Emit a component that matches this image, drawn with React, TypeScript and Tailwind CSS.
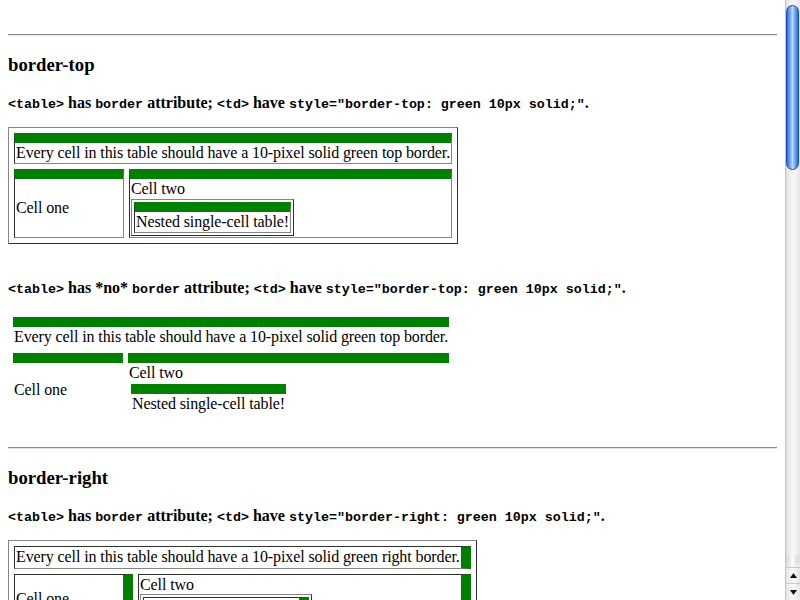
import type { ReactNode } from "react";

// Cell border variants, written out in full so Tailwind picks them up.
const CELL_TOP_BORDERED =
  "border-t-[10px] border-r border-b border-l border-t-[#008000] border-r-[#858585] border-b-[#858585] border-l-[#303030] p-px";
const CELL_TOP_PLAIN = "border-t-[10px] border-t-[#008000] p-px";
const CELL_RIGHT_BORDERED =
  "border-t border-r-[10px] border-b border-l border-t-[#303030] border-r-[#008000] border-b-[#858585] border-l-[#303030] p-px";

const TABLE_BORDERED =
  "border-separate border border-t-[#858585] border-l-[#858585] border-r-[#303030] border-b-[#303030]";

function Code({ children }: { children: ReactNode }) {
  return (
    <code className="font-['Liberation_Mono',monospace] text-[13.33px] font-bold leading-none">
      {children}
    </code>
  );
}

function Note({ noBorder, prop, className = "" }: { noBorder?: boolean; prop: string; className?: string }) {
  return (
    <p className={`text-[16px] font-bold leading-[18px] ${className}`}>
      <Code>&lt;table&gt;</Code> has {noBorder ? "*no* " : ""}
      <Code>border</Code> attribute; <Code>&lt;td&gt;</Code> have{" "}
      <Code>style="{prop}: green 10px solid;"</Code>.
    </p>
  );
}

function Heading({ children }: { children: ReactNode }) {
  return <h3 className="mt-[18px] text-[18.72px] font-bold leading-[22px]">{children}</h3>;
}

function Rule({ className = "" }: { className?: string }) {
  return <hr className={`h-0 border-t border-b border-t-[#8c8c8c] border-b-[#e4e4e4] ${className}`} />;
}

function BorderTopBordered() {
  return (
    <table className={`mt-[15px] border-spacing-[5px] tracking-[-0.1px] ${TABLE_BORDERED}`}>
      <tbody>
        <tr>
          <td colSpan={2} className={CELL_TOP_BORDERED}>
            Every cell in this table should have a 10-pixel solid green top border.
          </td>
        </tr>
        <tr>
          <td className={`w-[110px] ${CELL_TOP_BORDERED}`}>Cell one</td>
          <td className={CELL_TOP_BORDERED}>
            Cell two
            <table className={`border-spacing-[2px] ${TABLE_BORDERED}`}>
              <tbody>
                <tr>
                  <td className={CELL_TOP_BORDERED}>Nested single-cell table!</td>
                </tr>
              </tbody>
            </table>
          </td>
        </tr>
      </tbody>
    </table>
  );
}

function BorderTopPlain() {
  return (
    <table className="mt-[15px] border-separate border-spacing-[5px] tracking-[-0.1px]">
      <tbody>
        <tr>
          <td colSpan={2} className={CELL_TOP_PLAIN}>
            Every cell in this table should have a 10-pixel solid green top border.
          </td>
        </tr>
        <tr>
          <td className={`w-[110px] ${CELL_TOP_PLAIN}`}>Cell one</td>
          <td className={CELL_TOP_PLAIN}>
            Cell two
            <table className="border-separate border-spacing-[2px]">
              <tbody>
                <tr>
                  <td className={CELL_TOP_PLAIN}>Nested single-cell table!</td>
                </tr>
              </tbody>
            </table>
          </td>
        </tr>
      </tbody>
    </table>
  );
}

function BorderRightBordered() {
  return (
    <table className={`mt-[15px] border-spacing-[5px] tracking-[-0.1px] ${TABLE_BORDERED}`}>
      <tbody>
        <tr>
          <td colSpan={2} className={CELL_RIGHT_BORDERED}>
            Every cell in this table should have a 10-pixel solid green right border.
          </td>
        </tr>
        <tr>
          <td className={`w-[119px] ${CELL_RIGHT_BORDERED}`}>Cell one</td>
          <td className={CELL_RIGHT_BORDERED}>
            Cell two
            <table className={`border-spacing-[2px] ${TABLE_BORDERED}`}>
              <tbody>
                <tr>
                  <td className={CELL_RIGHT_BORDERED}>Nested single-cell table!</td>
                </tr>
              </tbody>
            </table>
          </td>
        </tr>
      </tbody>
    </table>
  );
}

function Scrollbar() {
  return (
    <div className="flex w-[15px] shrink-0 flex-col border-l border-l-[#c4c4c4] bg-[linear-gradient(to_right,#e2e2e2,#f6f6f6_45%,#f6f6f6_60%,#e6e6e6)]">
      <div className="flex flex-1 flex-col pt-[5px] pr-px">
        {/* thumb */}
        <div className="h-[165px] rounded-full border border-[#1c4bbd] bg-[linear-gradient(to_right,#2f68dc,#78aaf6_30%,#bcd9ff_50%,#78aaf6_70%,#2f68dc)]" />
        <div className="flex-1" />
        {/* track end cap */}
        <div className="h-[12px] rounded-b-full bg-[linear-gradient(to_right,#d6d6d6,#fbfbfb_50%,#d6d6d6)]" />
      </div>
      <div className="flex h-[16px] items-center justify-center border-t border-t-[#c8c8c8] bg-[linear-gradient(to_right,#e4e4e4,#fafafa_50%,#e4e4e4)]">
        <svg width="7" height="5" viewBox="0 0 7 5" aria-hidden="true">
          <path d="M3.5 0 L7 5 L0 5 Z" fill="#111" />
        </svg>
      </div>
      <div className="flex h-[17px] items-center justify-center border-t border-t-[#c8c8c8] bg-[linear-gradient(to_right,#e4e4e4,#fafafa_50%,#e4e4e4)]">
        <svg width="7" height="5" viewBox="0 0 7 5" aria-hidden="true">
          <path d="M0 0 L7 0 L3.5 5 Z" fill="#111" />
        </svg>
      </div>
    </div>
  );
}

export default function App() {
  return (
    <div className="flex h-[600px] w-[800px] overflow-hidden bg-white font-['Liberation_Serif',serif] text-[16px] leading-[18.4px] text-black">
      <main className="min-w-0 flex-1 px-[8px] pt-[34px]">
        <Rule />
        <Heading>border-top</Heading>
        <Note prop="border-top" className="mt-[18px]" />
        <BorderTopBordered />
        <Note noBorder prop="border-top" className="mt-[35px]" />
        <BorderTopPlain />

        <Rule className="mt-[25px]" />
        <Heading>border-right</Heading>
        <Note prop="border-right" className="mt-[18px]" />
        <BorderRightBordered />
      </main>
      <Scrollbar />
    </div>
  );
}
